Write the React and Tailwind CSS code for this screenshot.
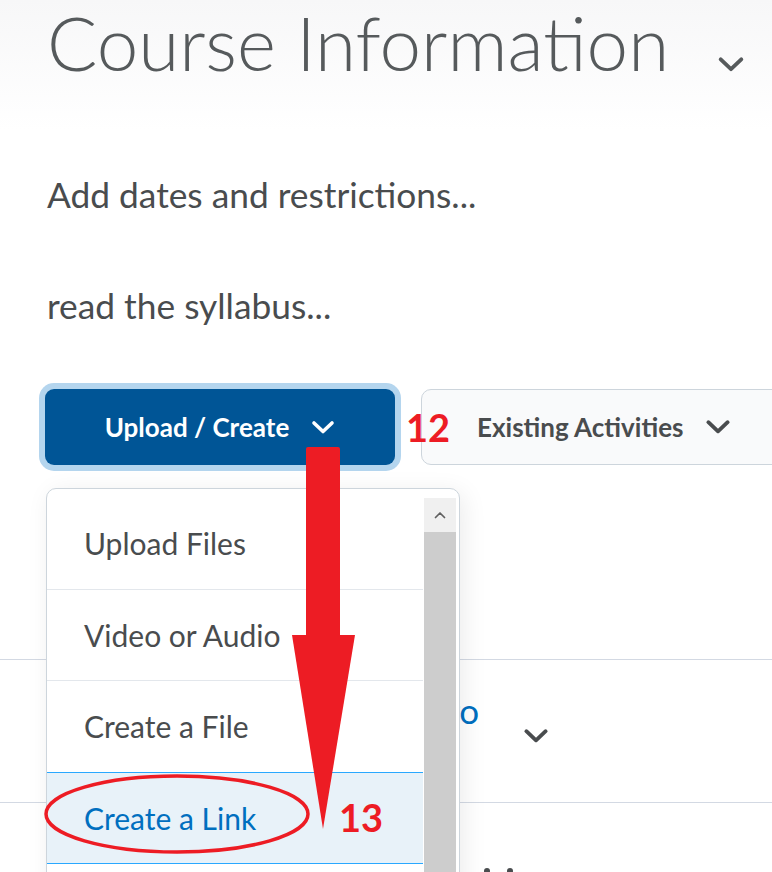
import React from "react";

function Chevron({ className = "", color = "#565a5c", sw = 3.2, up = false }) {
  return (
    <svg viewBox="0 0 24 14" className={className} fill="none">
      <path
        d={up ? "M3 12 L12 3 L21 12" : "M3 3 L12 11.5 L21 3"}
        stroke={color}
        strokeWidth={sw}
        strokeLinecap="round"
        strokeLinejoin="round"
      />
    </svg>
  );
}

const items = ["Upload Files", "Video or Audio", "Create a File"];

export default function App() {
  return (
    <div
      className="relative w-[772px] h-[872px] overflow-hidden bg-white"
      style={{ fontFamily: "Lato, 'Open Sans', sans-serif" }}
    >
      {/* Header */}
      <div className="h-[130px] bg-gradient-to-b from-[#f7f7f8] to-white px-[47px]">
        <div className="flex items-start pt-[5px]">
          <h1 className="text-[74.6px] leading-none font-light text-[#565a5c] whitespace-nowrap shrink-0">
            Course Information
          </h1>
          <Chevron className="w-[28px] h-[16px] ml-[48px] mt-[51px] shrink-0" color="#565a5c" sw={3.4} />
        </div>
      </div>

      <p className="mt-[47px] px-[47px] text-[35.3px] leading-none text-[#494c4e] whitespace-nowrap">
        Add dates and restrictions...
      </p>
      <p className="mt-[76px] px-[47px] text-[35.3px] leading-none text-[#494c4e] whitespace-nowrap">
        read the syllabus...
      </p>

      {/* Buttons */}
      <div className="mt-[65px] flex items-center pl-[45px] gap-[26px]">
        <div className="w-[350px] h-[76px] shrink-0 rounded-[9px] bg-[#005596] shadow-[0_0_0_6px_#b4d5ee] flex items-center justify-center gap-[22px]">
          <span className="text-white font-bold text-[26px] leading-none whitespace-nowrap">Upload / Create</span>
          <Chevron className="w-[24px] h-[14px]" color="#ffffff" sw={3.6} />
        </div>
        <div className="w-[380px] h-[76px] shrink-0 rounded-[10px] bg-[#f9fafb] border border-[#cdd5dc] flex items-center pl-[55px] gap-[22px]">
          <span className="text-[#494c4e] font-bold text-[26px] leading-none whitespace-nowrap">Existing Activities</span>
          <Chevron className="w-[26px] h-[15px]" color="#494c4e" sw={3.6} />
        </div>
      </div>

      {/* Background list */}
      <div className="mt-[194px]">
        <div className="h-[143px] border-t border-[#d3d9e3] flex items-start">
          <div className="w-[479px] shrink-0 text-right text-[35px] leading-none text-[#006fbf] pt-[33px] whitespace-nowrap">
            Course Intro
          </div>
          <Chevron className="w-[26px] h-[15px] ml-[44px] mt-[68px] shrink-0" color="#494c4e" sw={3.6} />
        </div>
        <div className="border-t border-[#d3d9e3] flex gap-[17px] pl-[484px] pt-[65px]">
          <span className="w-[6px] h-[6px] rounded-full bg-[#494c4e]" />
          <span className="w-[6px] h-[6px] rounded-full bg-[#494c4e]" />
        </div>
      </div>

      {/* Dropdown menu */}
      <div className="absolute left-[46px] top-[488px] w-[414px] h-[420px] rounded-[10px] border border-[#cdd5dc] bg-white shadow-[4px_4px_24px_rgba(0,0,0,0.08)] pt-[9px] flex">
        <div className="w-[376px]">
          {items.map((t) => (
            <div
              key={t}
              className="h-[91.5px] border-b border-[#e3e7ec] flex items-center pl-[37px] text-[30px] leading-none text-[#494c4e] whitespace-nowrap"
            >
              {t}
            </div>
          ))}
          <div className="h-[92px] -mt-px border-y border-[#29a8ff] bg-[#e8f2f9] flex items-center pl-[37px] text-[30px] leading-none text-[#006fbf] whitespace-nowrap">
            Create a Link
          </div>
        </div>
        <div className="ml-px w-[32px] flex flex-col">
          <div className="h-[34px] bg-[#f0f0f0] flex items-center justify-center">
            <Chevron className="w-[12px] h-[8px]" color="#606060" sw={3.5} up />
          </div>
          <div className="flex-1 bg-[#cdcdcd]" />
        </div>
      </div>

      {/* Annotations */}
      <svg className="absolute left-0 top-0 w-[772px] h-[872px] pointer-events-none" viewBox="0 0 772 872">
        <path d="M306 449 Q306 447 308 447 L338 447 Q340 447 340 449 L340 636 L306 636 Z" fill="#ed1c24" />
        <polygon points="292,635 355,635 323,829" fill="#ed1c24" />
        <ellipse cx="177" cy="814" rx="131" ry="38" fill="none" stroke="#ed1c24" strokeWidth="3.5" />
      </svg>
      <span className="absolute left-[406px] top-[408px] text-[38px] leading-none font-bold text-[#ed1c24]">12</span>
      <span className="absolute left-[339px] top-[798px] text-[38px] leading-none font-bold text-[#ed1c24]">13</span>
    </div>
  );
}
